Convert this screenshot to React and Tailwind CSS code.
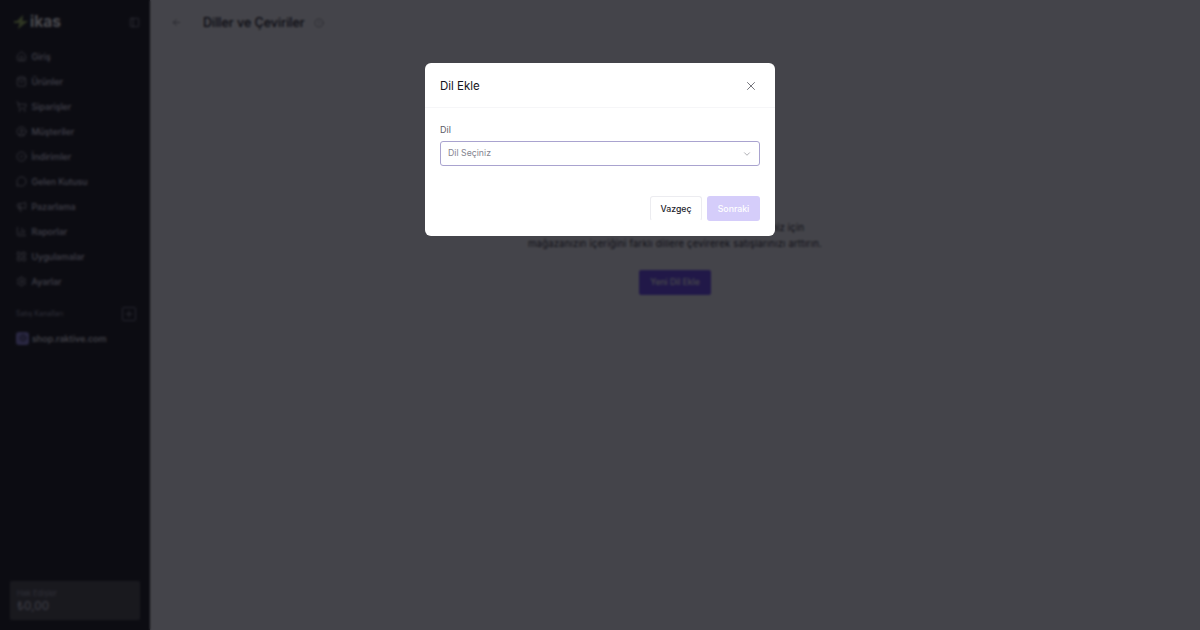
import { ArrowLeft, ChartColumn, ChevronDown, CircleAlert, CircleUser, Globe, Home, LayoutGrid, Megaphone, MessageCircle, PanelLeft, Plus, Settings, ShoppingBag, ShoppingCart, CirclePercent, X } from 'lucide-react'

const MENU = [
  { label: 'Giriş', icon: Home },
  { label: 'Ürünler', icon: ShoppingBag },
  { label: 'Siparişler', icon: ShoppingCart },
  { label: 'Müşteriler', icon: CircleUser },
  { label: 'İndirimler', icon: CirclePercent },
  { label: 'Gelen Kutusu', icon: MessageCircle },
  { label: 'Pazarlama', icon: Megaphone },
  { label: 'Raporlar', icon: ChartColumn },
  { label: 'Uygulamalar', icon: LayoutGrid },
  { label: 'Ayarlar', icon: Settings },
]

function Sidebar() {
  return (
    <aside className="flex h-full w-[150px] shrink-0 flex-col bg-[#222226] pb-[10px]">
      {/* Logo */}
      <div className="flex h-[44px] items-center justify-between pl-[14px] pr-[10px]">
        <div className="flex items-center gap-[2px]">
          <svg width="14" height="14" viewBox="0 0 14 14">
            <path d="M9 0 L3 6 H0 V8 H5.5 L4 14 L14 6 H8.5 Z" fill="#a3bd62" />
          </svg>
          <span className="text-[15.5px] leading-none font-bold text-white">ikas</span>
        </div>
        <PanelLeft size={11} strokeWidth={1.3} className="text-[#d0d0da]" />
      </div>

      {/* Menu */}
      <nav className="flex flex-col">
        {MENU.map((item) => (
          <div key={item.label} className="flex h-[25px] items-center gap-[5px] pl-[15.5px] text-[#dcdce6]">
            <item.icon size={11} strokeWidth={1.4} />
            <span className="text-[8.8px] font-medium">{item.label}</span>
          </div>
        ))}
      </nav>

      {/* Sales channels */}
      <div className="mt-[12px] flex h-[16px] items-center justify-between pl-[16px] pr-[14px]">
        <span className="text-[7px] font-medium text-[#8b8b9c]">Satış Kanalları</span>
        <div className="flex size-[14px] items-center justify-center rounded-[2px] border border-[#77778a] text-[#dcdce6]">
          <Plus size={10} strokeWidth={1.3} />
        </div>
      </div>
      <div className="mt-[9px] flex items-center gap-[3px] pl-[16px]">
        <div className="flex size-[13px] items-center justify-center rounded-[3px] bg-[#8f86d8] text-[#222226]">
          <Globe size={8} strokeWidth={1.4} />
        </div>
        <span className="pt-[1px] text-[9px] font-medium text-[#e8e8ee]">shop.raktive.com</span>
      </div>

      {/* Balance */}
      <div className="mx-[10px] mt-auto flex h-[39px] flex-col justify-center rounded-[2px] bg-[#525254] pt-[2px] pl-[7px]">
        <span className="text-[7.5px] leading-[10px] text-[#a5a5b2]">Hak Edişler</span>
        <span className="text-[11.5px] leading-[15px] font-medium text-[#c4c4d0]">₺0,00</span>
      </div>
    </aside>
  )
}

function Main() {
  return (
    <main className="flex min-w-0 flex-1 flex-col bg-[#f8f8fa]">
      <div className="flex h-[45px] items-center pl-[21px]">
        <ArrowLeft size={11} strokeWidth={1.3} className="text-[#4b4b55]" />
        <h1 className="ml-[21px] pt-[1px] text-[12.5px] font-medium text-[#14141c]">Diller ve Çeviriler</h1>
        <CircleAlert size={10} strokeWidth={1.2} className="ml-[9px] text-[#4b4b55]" />
      </div>
      <div className="mt-[175px] flex flex-col items-center">
        <p className="text-center text-[9.5px] leading-[16px] tracking-[0.19px] text-[#2f2f38]">
          Farklı ülkelerdeki yeni müşterilerinize ulaşabilmeniz için
          <br />
          mağazanızın içeriğini farklı dillere çevirerek satışlarınızı arttırın.
        </p>
        <button className="mt-[18px] flex h-[25px] w-[72px] items-center justify-center rounded-[2px] bg-[#6f4ff2] text-[8.5px] font-medium text-white">
          Yeni Dil Ekle
        </button>
      </div>
    </main>
  )
}

function Modal() {
  return (
    <div className="absolute inset-0 flex items-start justify-center bg-[#05050c]/74 pt-[63px] backdrop-blur-[1px]">
      <div className="w-[350px] rounded-[6px] bg-white">
        <div className="flex h-[45px] items-center justify-between border-b border-[#f6f6f8] pl-[15px] pr-[17px] pt-[2px]">
          <h2 className="pt-[1px] text-[11.5px] font-normal text-[#14141c]">Dil Ekle</h2>
          <X size={14} strokeWidth={1.2} className="text-[#3a3a44]" />
        </div>
        <div className="px-[15px] pt-[16px] pb-[15px]">
          <label className="block text-[9px] leading-[12px] text-[#5c5c68]">Dil</label>
          <div className="mt-[5px] flex h-[25px] items-center justify-between rounded-[3px] border border-[#a9a3cf] pl-[7px] pr-[7px]">
            <span className="text-[8.75px] text-[#85858f]">Dil Seçiniz</span>
            <ChevronDown size={10} strokeWidth={1.3} className="text-[#6b6b76]" />
          </div>
          <div className="mt-[30px] flex justify-end gap-[5px]">
            <button className="flex h-[25px] w-[52px] items-center justify-center rounded-[3px] border border-[#ececf0] border-b-transparent pt-[2px] text-[8.75px] font-medium text-[#23232c]">
              Vazgeç
            </button>
            <button className="flex h-[25px] w-[53px] items-center justify-center rounded-[3px] bg-[#d5cdfa] pt-[2px] text-[8.75px] font-medium text-white">
              Sonraki
            </button>
          </div>
        </div>
      </div>
    </div>
  )
}

export default function App() {
  return (
    <div className="relative flex h-[630px] w-[1200px] overflow-hidden font-['Inter',sans-serif]">
      <Sidebar />
      <Main />
      <Modal />
    </div>
  )
}
